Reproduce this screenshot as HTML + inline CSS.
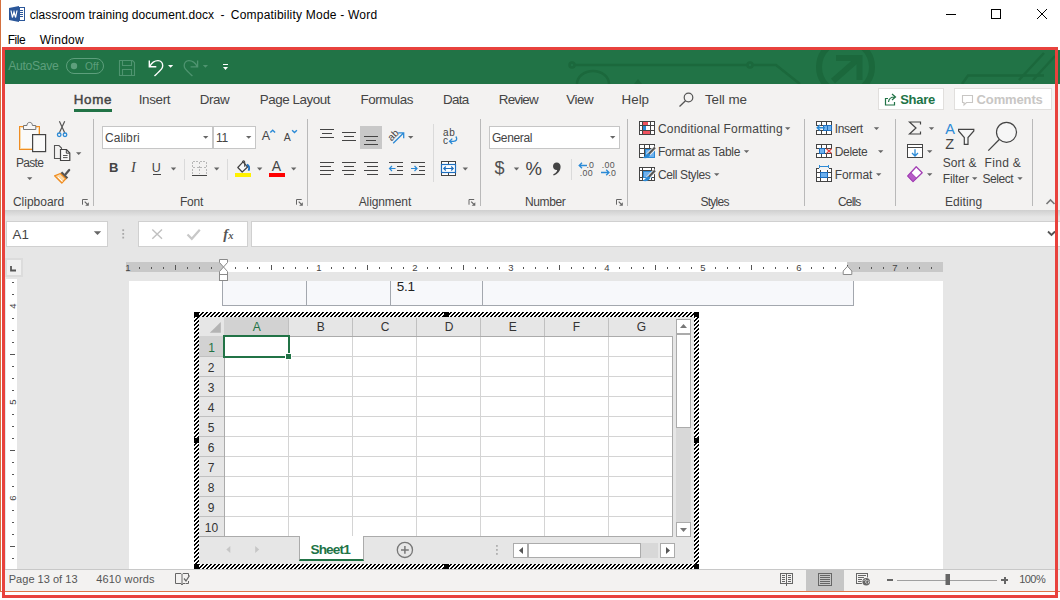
<!DOCTYPE html>
<html><head><meta charset="utf-8"><title>Word</title>
<style>
html,body{margin:0;padding:0;}
body{width:1060px;height:600px;overflow:hidden;background:#fff;position:relative;font-family:"Liberation Sans",sans-serif;}
.a{position:absolute;box-sizing:border-box;}
.t{position:absolute;white-space:nowrap;line-height:1;font-family:"Liberation Sans",sans-serif;}
svg{position:absolute;left:0;top:0;}
</style></head><body>
<!-- window accent border -->
<div class="a" style="left:0;top:0;width:1px;height:592px;background:#d4703f"></div>
<div class="a" style="left:0;top:591px;width:1060px;height:1px;background:#e0764a"></div>
<!-- green quick access bar -->
<div class="a" style="left:5px;top:50px;width:1055px;height:34px;background:#217346"></div>
<!-- tabs + ribbon -->
<div class="a" style="left:5px;top:84px;width:1055px;height:126px;background:#f3f2f1"></div>
<!-- workspace -->
<div class="a" style="left:5px;top:210px;width:1055px;height:359px;background:#e6e6e6"></div>
<div class="a" style="left:5px;top:210px;width:1055px;height:7px;background:linear-gradient(#cfcfcf,#e6e6e6)"></div>
<!-- status bar -->
<div class="a" style="left:5px;top:569px;width:1055px;height:22px;background:#f3f2f1;border-top:1px solid #c8c8c8"></div>
<div class="a" style="left:806px;top:570px;width:38px;height:21px;background:#c6c6c6"></div>
<!-- share / comments buttons -->
<div class="a" style="left:878px;top:88px;width:66px;height:22px;background:#fff;border:1px solid #e1dfdd"></div>
<div class="a" style="left:954px;top:88px;width:98px;height:22px;background:#fff;border:1px solid #e1dfdd"></div>
<!-- home underline -->
<div class="a" style="left:74px;top:109px;width:38px;height:3px;background:#217346"></div>
<!-- ribbon combo boxes -->
<div class="a" style="left:102px;top:126px;width:111px;height:23px;background:#fff;border:1px solid #c6c6c6"></div>
<div class="a" style="left:213px;top:126px;width:43px;height:23px;background:#fff;border:1px solid #c6c6c6"></div>
<div class="a" style="left:489px;top:126px;width:131px;height:23px;background:#fff;border:1px solid #c6c6c6"></div>
<!-- selected align button -->
<div class="a" style="left:360px;top:126px;width:22px;height:23px;background:#c8c8c8"></div>
<!-- formula bar -->
<div class="a" style="left:6px;top:221px;width:102px;height:26px;background:#fff;border:1px solid #d0d0d0"></div>
<div class="a" style="left:138px;top:221px;width:110px;height:26px;background:#fff;border:1px solid #d0d0d0"></div>
<div class="a" style="left:251px;top:221px;width:809px;height:26px;background:#fff;border:1px solid #d0d0d0;border-right:none"></div>
<!-- tab selector -->
<div class="a" style="left:5px;top:258px;width:18px;height:19px;background:#dcdcdc"></div>
<div class="a" style="left:7px;top:260px;width:14px;height:15px;background:#f0f0f0"></div>
<!-- rulers -->
<div class="a" style="left:126px;top:262px;width:817px;height:10px;background:#c8c8c8"></div>
<div class="a" style="left:223px;top:262px;width:624px;height:10px;background:#fff"></div>
<div class="a" style="left:6px;top:279px;width:11px;height:290px;background:#fff"></div>
<!-- page -->
<div class="a" style="left:129px;top:281px;width:814px;height:288px;background:#fff"></div>
<!-- doc table -->
<div class="a" style="left:222px;top:281px;width:632px;height:25px;background:#f7f8fb;border:1px solid #a3a7ae;border-top:none"></div>
<div class="a" style="left:306px;top:281px;width:1px;height:24px;background:#a3a7ae"></div>
<div class="a" style="left:390px;top:281px;width:1px;height:24px;background:#a3a7ae"></div>
<div class="a" style="left:482px;top:281px;width:1px;height:24px;background:#a3a7ae"></div>
<!-- EXCEL OBJECT -->
<div class="a" style="left:194px;top:312px;width:505px;height:257px;background:repeating-linear-gradient(135deg,#000 0,#000 1.42px,#fff 1.42px,#fff 2.83px)"></div>
<div class="a" style="left:199px;top:317px;width:495px;height:247px;background:#e6e6e6"></div>
<!-- grid -->
<div class="a" style="left:224px;top:336px;width:449px;height:201px;background-color:#fff;background-image:linear-gradient(90deg,#d4d4d4 1px,transparent 1px),linear-gradient(#d4d4d4 1px,transparent 1px);background-size:64px 20px;background-position:0 0;border-right:1px solid #ababab;border-bottom:1px solid #ababab"></div>
<!-- headers -->
<div class="a" style="left:224px;top:317px;width:65px;height:19px;background:#d2d2d2"></div>
<div class="a" style="left:199px;top:336px;width:25px;height:21px;background:#d2d2d2"></div>
<!-- sheet tab -->
<div class="a" style="left:299px;top:536px;width:65px;height:25px;background:#fff;border-bottom:2px solid #217346;border-left:1px solid #ababab;border-right:1px solid #ababab"></div>
<!-- scrollbars -->
<div class="a" style="left:676px;top:319px;width:15px;height:218px;background:#d8d8d8"></div>
<div class="a" style="left:676px;top:319px;width:15px;height:15px;background:#fff;border:1px solid #ababab"></div>
<div class="a" style="left:676px;top:334px;width:15px;height:94px;background:#fff;border:1px solid #ababab"></div>
<div class="a" style="left:676px;top:522px;width:15px;height:15px;background:#fff;border:1px solid #ababab"></div>
<div class="a" style="left:513px;top:543px;width:145px;height:15px;background:#d8d8d8"></div>
<div class="a" style="left:513px;top:543px;width:15px;height:15px;background:#fff;border:1px solid #ababab"></div>
<div class="a" style="left:528px;top:543px;width:113px;height:15px;background:#fff;border:1px solid #ababab"></div>
<div class="a" style="left:660px;top:543px;width:15px;height:15px;background:#fff;border:1px solid #ababab"></div>
<svg width="1060" height="600" viewBox="0 0 1060 600" fill="none">
<!-- ===== title bar ===== -->
<g id="wordicon">
<path d="M9 8 L19 6 L19 22 L9 20 Z" fill="#2b579a"/>
<rect x="19.5" y="7.5" width="5" height="13" fill="#fff" stroke="#2b579a" stroke-width="1"/>
<path d="M19 10.5h4M19 12.5h4M19 14.5h4M19 16.5h4" stroke="#2b579a" stroke-width="1"/>
<path d="M11 10.5 L12.4 17.5 L14 12 L15.6 17.5 L17 10.5" stroke="#fff" stroke-width="1.2" fill="none"/>
</g>
<g stroke="#000" stroke-width="1" shape-rendering="crispEdges">
<path d="M946 14.5h10"/>
<rect x="991.5" y="9.5" width="9" height="9"/>
</g>
<path d="M1037 9 L1047 19 M1047 9 L1037 19" stroke="#000" stroke-width="1"/>
<!-- ===== green bar decorations ===== -->
<clipPath id="gb"><rect x="5" y="50" width="1055" height="34"/></clipPath>
<g clip-path="url(#gb)">
<g stroke="#1b683c" stroke-width="2.5" fill="none">
<circle cx="572" cy="65" r="2.5"/>
<path d="M575 65 H747"/>
<circle cx="750" cy="65" r="2.5"/>
<path d="M753 65 H776 L800 84"/>
<path d="M577 84 A16 13 0 0 1 609 84"/>
<path d="M962 84 L968 75.5 H1044"/>
<path d="M1019 80 L1044 53 M1033 80 L1055 56"/>
</g>
<path d="M634 84 l4 -5 l4 5z" fill="#1b683c"/>
<g stroke="#1b683c" stroke-width="6" fill="none">
<circle cx="845.5" cy="67" r="26.5"/>
<path d="M833 81 L858 59"/>
<path d="M836 58 H859.5 V80"/>
</g>
</g>
<!-- autosave toggle -->
<rect x="66.500" y="58.500" width="37" height="15" rx="7.5" stroke="#5d9f7c" stroke-width="1"/>
<circle cx="74" cy="66" r="3.2" fill="#5d9f7c"/>
<!-- save icon -->
<g stroke="#4f9470" stroke-width="1.1">
<path d="M119.500 60.500 h13 l2 2 v13 h-15z"/>
<path d="M122.500 60.500 v5 h9 v-5"/>
<path d="M122.500 75.500 v-6 h9 v6"/>
</g>
<!-- undo -->
<path d="M149.300 60.500 v6.300 h7 M149.600 66.600 C152 62 155 60.600 158 60.600 C161 60.600 162.700 63 162.700 65.800 C162.700 68.300 161.500 69.300 154.500 76" stroke="#fff" stroke-width="1.400" fill="none"/>
<path d="M168 65 h5.200 l-2.600 2.800z" fill="#fff"/>
<!-- redo -->
<path d="M197.600 60.500 v6.300 h-7 M197.300 66.600 C194.900 62 191.900 60.600 188.900 60.600 C185.900 60.600 184.200 63 184.200 65.800 C184.200 68.300 185.400 69.300 192.400 76" stroke="#4f9470" stroke-width="1.300" fill="none"/>
<path d="M202.800 65 h5.200 l-2.600 2.800z" fill="#4f9470"/>
<!-- customize QAT -->
<path d="M223 64.500 h5" stroke="#fff" stroke-width="1"/>
<path d="M223 67 h5 l-2.500 3z" fill="#fff"/>
<!-- ===== tabs row ===== -->
<circle cx="688.500" cy="97.500" r="4.300" stroke="#555" stroke-width="1.200"/>
<path d="M685.500 100.800 L679.500 106.500" stroke="#555" stroke-width="1.300"/>
<!-- share icon -->
<g stroke="#217346" stroke-width="1.200" fill="none">
<path d="M888 98.500 h-2.500 v6.500 h9 v-3"/>
<path d="M888.500 102 c0.500 -4 3 -5 6 -5 M892 94 l3.500 3 l-3.500 3"/>
</g>
<!-- comment icon -->
<path d="M962.500 95.500 h10 v7 h-6 l-2.500 2.500 v-2.500 h-1.500z" stroke="#c8c6c4" stroke-width="1.100"/>
<!-- ===== ribbon: separators ===== -->
<g stroke="#b9b9b9" stroke-width="1" shape-rendering="crispEdges">
<path d="M93.500 119 V206 M307.500 119 V206 M480.500 119 V206 M627.500 119 V206 M804.500 119 V206 M895.500 119 V206 M1032.500 119 V206"/>
</g>
<g stroke="#dadada" stroke-width="1" shape-rendering="crispEdges">
<path d="M184.500 159 V180 M227.500 159 V180 M433.500 124 V182 M571.500 159 V180"/>
</g>
<!-- dropdown arrows (dark) -->
<g fill="#666">
<path d="M27 177.200 h5.400 l-2.700 2.800z"/>
<path d="M76 152.200 h5.400 l-2.700 2.800z"/>
<path d="M203 136 h5.400 l-2.700 2.800z"/>
<path d="M246 136 h5.400 l-2.700 2.800z"/>
<path d="M170.800 167.600 h5.400 l-2.700 2.800z"/>
<path d="M214 167.600 h5.400 l-2.700 2.800z"/>
<path d="M257 167.600 h5.400 l-2.700 2.800z"/>
<path d="M291 167.600 h5.400 l-2.700 2.800z"/>
<path d="M408 136 h5.400 l-2.700 2.800z"/>
<path d="M462.600 167.600 h5.400 l-2.700 2.800z"/>
<path d="M610 136 h5.400 l-2.700 2.800z"/>
<path d="M513.800 167.600 h5.400 l-2.700 2.800z"/>
<path d="M785 127.300 h5.400 l-2.700 2.800z"/>
<path d="M743.800 150.300 h5.400 l-2.700 2.800z"/>
<path d="M714 173.300 h5.400 l-2.700 2.800z"/>
<path d="M873.800 127.300 h5.400 l-2.700 2.800z"/>
<path d="M878 150.300 h5.400 l-2.700 2.800z"/>
<path d="M876 173.300 h5.400 l-2.700 2.800z"/>
<path d="M928.800 127.300 h5.400 l-2.700 2.800z"/>
<path d="M927 150.300 h5.400 l-2.700 2.800z"/>
<path d="M927 173.300 h5.400 l-2.700 2.800z"/>
<path d="M972 177.200 h5.400 l-2.700 2.800z"/>
<path d="M1017.300 177.200 h5.400 l-2.700 2.800z"/>
</g>
<!-- dialog launchers -->
<g stroke="#777" stroke-width="1" fill="none">
<g id="dl"><path d="M82.500 204.700 V199.500 H87.700" stroke="#666"/><path d="M88.800 202.200 V205.700 H85.200 Z" fill="#666" stroke="none"/><path d="M84.700 201.700 L87.200 204.200" stroke="#666" stroke-width="1.200"/></g>
<use href="#dl" x="214"/><use href="#dl" x="386.500"/><use href="#dl" x="534"/>
</g>
<!-- collapse chevron -->
<path d="M1046.500 204 L1050.500 200 L1054.500 204" stroke="#777" stroke-width="1.600"/>
<!-- ===== clipboard group ===== -->
<rect x="19.500" y="126.500" width="20" height="23" fill="#fafafa" stroke="#ef8d22" stroke-width="1"/>
<rect x="20.500" y="127.500" width="18" height="21" fill="none" stroke="#fbd9a8" stroke-width="1"/>
<path d="M23.500 129.500 V125.500 H27 C27 123.500 28 122.400 29.700 122.400 C31.400 122.400 32.400 123.500 32.400 125.500 H35.800 V129.500 Z" fill="#f6f6f6" stroke="#777" stroke-width="1"/>
<rect x="32.600" y="134.600" width="13" height="17" fill="#fafafa" stroke="#444" stroke-width="1.200"/>
<!-- scissors -->
<path d="M59.400 121.300 L64.700 132.800 M64.700 121.300 L59.400 132.800" stroke="#555" stroke-width="1.200"/>
<circle cx="59.200" cy="134.800" r="1.800" stroke="#2b8ad6" stroke-width="1.300"/>
<circle cx="65" cy="134.800" r="1.800" stroke="#2b8ad6" stroke-width="1.300"/>
<!-- copy -->
<path d="M60 158.500 H54.500 V145.500 H59 L61.500 148 V149" stroke="#555" stroke-width="1.100"/>
<path d="M60.500 149.500 H66.500 L69.800 153 V160.500 H60.500 Z" fill="#fafafa" stroke="#444" stroke-width="1.200"/>
<path d="M66.300 149.800 V153.200 H69.600" stroke="#444" stroke-width="1"/>
<path d="M63 155.500 H67.600 M63 157.600 H67.600" stroke="#555" stroke-width="1"/>
<!-- format painter -->
<path d="M69.200 170 L65.600 174.300" stroke="#555" stroke-width="2.200" stroke-linecap="round"/>
<path d="M61.300 172.300 L67.300 178.300" stroke="#555" stroke-width="2.600"/>
<path d="M60.300 173.500 L54.600 175.800 L61.800 183 L65.800 178.800 Z" fill="#fbd9a8" stroke="#ef8d22" stroke-width="1.300" stroke-linejoin="round"/>
<path d="M58 177 L62.500 181.500" stroke="#fff" stroke-width="1"/>
<!-- ===== font group ===== -->
<path d="M152.500 174.500 H160.500" stroke="#444" stroke-width="1" shape-rendering="crispEdges"/>
<path d="M270.300 132.600 L272.700 130.300 L275.100 132.600" stroke="#2b8ad6" stroke-width="1.400"/>
<path d="M292.100 130.300 L294.500 132.600 L296.900 130.300" stroke="#2b8ad6" stroke-width="1.400"/>
<!-- borders -->
<g stroke="#b8b8b8" stroke-width="1" stroke-dasharray="2 1.500" shape-rendering="crispEdges">
<path d="M192.500 161.500 H206.500 M192.500 161.500 V173.500 M206.500 161.500 V173.500 M199.500 162 V174 M193 167.500 H207"/>
</g>
<path d="M192 175.500 H207" stroke="#444" stroke-width="1.200" shape-rendering="crispEdges"/>
<!-- fill bucket -->
<path d="M243 161.800 L237.800 167.500 L242.200 172 L247.600 167 Z" fill="#f8f8f8" stroke="#444" stroke-width="1.200" stroke-linejoin="round"/>
<path d="M242.500 162.500 C242.300 160.500 244.600 160.300 244.700 162.200 V166.800" stroke="#444" stroke-width="1.100" fill="none"/>
<path d="M246.800 164.600 C249.200 165.300 249.700 167.600 248.600 170.800" stroke="#1e6fbf" stroke-width="1.800" fill="none"/>
<rect x="235" y="173" width="16" height="4" fill="#fff100"/>
<rect x="269" y="173" width="16" height="4" fill="#ff0000"/>
<!-- ===== alignment group ===== -->
<g stroke="#444" stroke-width="1" shape-rendering="crispEdges">
<path d="M320 129.500 H334 M322 133.500 H332 M320 137.500 H334"/>
<path d="M342 132.500 H356 M344 136.500 H354 M342 140.500 H356"/>
<path d="M364 136.500 H378 M366 140.500 H376 M364 144.500 H378"/>
<path d="M320 162.500 H334 M320 166.500 H331 M320 170.500 H334 M320 174.500 H331"/>
<path d="M342 162.500 H356 M344 166.500 H354 M342 170.500 H356 M344 174.500 H354"/>
<path d="M364 162.500 H378 M367 166.500 H378 M364 170.500 H378 M367 174.500 H378"/>
<path d="M389 162.500 H403 M397 166.500 H403 M397 170.500 H403 M389 174.500 H403"/>
<path d="M411 162.500 H425 M419 166.500 H425 M419 170.500 H425 M411 174.500 H425"/>
</g>
<g stroke="#2b8ad6" stroke-width="1.200" fill="none">
<path d="M389.500 168.500 H395.500 M392 166 L389.500 168.500 L392 171"/>
<path d="M411 168.500 H417 M414.500 166 L417 168.500 L414.500 171"/>
</g>
<!-- orientation -->
<text transform="translate(391.500 141.500) rotate(-45)" font-family="Liberation Sans" font-size="10" fill="#444">ab</text>
<path d="M393.200 143.300 L403.300 133.200 M398.300 132.800 H403.700 V138.200" stroke="#2b8ad6" stroke-width="1.300" fill="none"/>
<!-- wrap text -->
<text x="443" y="136.300" font-family="Liberation Sans" font-size="10" fill="#444" letter-spacing="0.6">ab</text>
<text x="443" y="143.600" font-family="Liberation Sans" font-size="10" fill="#444">c</text>
<path d="M455.800 136.500 C457.800 139 456.500 141.300 453.500 141.300 H449.800 M452.300 138.600 L449.500 141.300 L452.300 144" stroke="#2b8ad6" stroke-width="1.300" fill="none"/>
<!-- merge & center -->
<rect x="441.500" y="161.500" width="14" height="14" fill="#fff" stroke="#444" stroke-width="1"/>
<path d="M448.500 161.500 V164.500 M448.500 172.500 V175.500" stroke="#444" stroke-width="1"/>
<rect x="441.500" y="164.500" width="14" height="8" fill="#fff" stroke="#1e6fbf" stroke-width="1.200"/>
<path d="M444 168.500 H453 M445.800 166.500 L443.800 168.500 L445.800 170.500 M451.200 166.500 L453.200 168.500 L451.200 170.500" stroke="#1e6fbf" stroke-width="1.200" fill="none"/>
<!-- comma style -->
<path d="M556.700 162.400 C559 162.400 560.600 164 560.600 166.800 C560.600 171 557.500 174.300 553.600 175.500 L553.200 174.300 C555.500 173.300 557 171.800 557.200 170 C554.800 170.300 553 168.700 553 166.300 C553 164 554.600 162.400 556.700 162.400 Z" fill="#444"/>
<!-- inc / dec decimal -->
<g font-family="Liberation Sans" font-size="8.800" fill="#555">
<text x="586.500" y="168">.0</text>
<text x="579.800" y="175.800" letter-spacing="0.300">.00</text>
<text x="601.800" y="168" letter-spacing="0.300">.00</text>
<text x="608.500" y="175.800">.0</text>
</g>
<g stroke="#2b8ad6" stroke-width="1.300" fill="none">
<path d="M579.200 165.500 H587 M582 162.800 L579.200 165.500 L582 168.200"/>
<path d="M601 172.500 H609 M606.200 169.800 L609 172.500 L606.200 175.200"/>
</g>
<!-- ===== styles group icons ===== -->
<g shape-rendering="crispEdges">
<rect x="639.500" y="121.500" width="15" height="13" fill="#fff" stroke="#444"/>
<rect x="643" y="122" width="5" height="4" fill="#f0525f"/>
<rect x="643" y="126" width="3" height="4" fill="#2b8ad6"/>
<rect x="643" y="130" width="8" height="4" fill="#f0525f"/>
<path d="M642.500 121 V135 M650.500 121 V135 M639 125.500 H655 M639 130.500 H655" stroke="#444" fill="none"/>
<rect x="646" y="126" width="4" height="4" fill="#fff"/>
<!-- format as table -->
<rect x="639.500" y="144.500" width="15" height="13" fill="#fff" stroke="#444"/>
<path d="M644.500 144 V158 M649.500 144 V158 M639 148.500 H655 M639 153.500 H655" stroke="#444" fill="none"/>
<rect x="645.500" y="149.500" width="9" height="8" fill="#6fb1ee" stroke="#2b8ad6"/>
<!-- cell styles -->
<rect x="639.500" y="167.500" width="15" height="13" fill="#fff" stroke="#444"/>
<path d="M639 170.500 H655 M639 177.500 H655 M642.500 167 V181 M651.500 167 V181" stroke="#444" fill="none"/>
<rect x="643" y="171" width="8" height="6" fill="#6fb1ee" stroke="#2b8ad6"/>
</g>
<g id="brush">
<path d="M655.300 147.300 L647.500 155.300" stroke="#f3f2f1" stroke-width="4"/>
<path d="M655 147.600 L648 154.800" stroke="#555" stroke-width="2.200"/>
<path d="M648.800 153.200 C646 153.500 645.500 156.500 642.500 157.800 C645.500 159 649.500 158 650.300 154.800 Z" fill="#2b8ad6"/>
</g>
<use href="#brush" y="23"/>
<!-- ===== cells group icons ===== -->
<g shape-rendering="crispEdges">
<rect x="816.500" y="121.500" width="15" height="13" fill="#fff" stroke="#444"/>
<path d="M821.500 121 V135 M826.500 121 V135 M816 125.500 H832 M816 130.500 H832" stroke="#444" fill="none"/>
<rect x="816" y="126" width="6" height="4" fill="#f3f2f1"/>
<rect x="823.500" y="125.500" width="8" height="5" fill="#6fb1ee" stroke="#1e6fbf"/>
<path d="M827.500 125 V131" stroke="#1e6fbf"/>
<!-- delete -->
<rect x="816.500" y="144.500" width="15" height="13" fill="#fff" stroke="#444"/>
<path d="M821.500 144 V158 M826.500 144 V158 M816 148.500 H832 M816 153.500 H832" stroke="#444" fill="none"/>
<rect x="816" y="149" width="3" height="4" fill="#f3f2f1"/>
<rect x="825" y="149" width="8" height="4" fill="#f3f2f1"/>
<rect x="819.500" y="148.500" width="5" height="5" fill="#6fb1ee" stroke="#1e6fbf"/>
<!-- format -->
<rect x="816.500" y="168.500" width="15" height="13" fill="#fff" stroke="#444"/>
<path d="M820.500 168 V182 M827.500 168 V182 M816 172.500 H832 M816 177.500 H832" stroke="#444" fill="none"/>
<rect x="819" y="168" width="10" height="2" fill="#f3f2f1"/>
<rect x="820.500" y="172.500" width="7" height="5" fill="#6fb1ee" stroke="#1e6fbf"/>
<path d="M819 166.500 H829 M819.500 165 V168 M828.500 165 V168" stroke="#2b8ad6" fill="none"/>
</g>
<path d="M817.300 127.800 H825 M820 125 L817.200 127.800 L820 130.600" stroke="#2b8ad6" stroke-width="1.400" fill="none"/>
<path d="M826.500 148.800 L831.500 153.400 M831.500 148.800 L826.500 153.400" stroke="#e8403c" stroke-width="1.200"/>
<!-- ===== editing group icons ===== -->
<path d="M920.500 124.500 V122 H909.500 L916 128 L909.500 134 H920.500 V131.500" stroke="#444" stroke-width="1.200" fill="none"/>
<g shape-rendering="crispEdges">
<rect x="907.500" y="144.500" width="15" height="13" fill="#fff" stroke="#444"/>
<path d="M907 147.500 H923" stroke="#444"/>
</g>
<path d="M915 149.200 V156 M912 153 L915 156 L918 153" stroke="#2b8ad6" stroke-width="1.300" fill="none"/>
<path d="M907.800 176 L916.200 166.700 L922.200 172.700 L913 181.500 Z" fill="#fff" stroke="#a33fb5" stroke-width="1.300" stroke-linejoin="round"/>
<path d="M907.800 176 L910.900 172.600 L916.500 178.200 L913 181.500 Z" fill="#b65cc6" stroke="#a33fb5" stroke-width="1"/>
<path d="M958.600 129.300 H973.800 V131 L968 137.500 V144.300 H964.300 V137.500 L958.600 131 Z" stroke="#444" stroke-width="1.200" fill="#f6f6f6"/>
<circle cx="1006.500" cy="132.300" r="10" stroke="#444" stroke-width="1.200" fill="#f6f6f6"/>
<path d="M999.300 139.500 L988.300 150.600" stroke="#444" stroke-width="1.300"/>
<!-- ===== formula bar ===== -->
<path d="M93.800 231.200 h7.400 l-3.700 3.800z" fill="#666"/>
<g fill="#a8a8a8"><rect x="122.300" y="229.300" width="1.800" height="1.800"/><rect x="122.300" y="233" width="1.800" height="1.800"/><rect x="122.300" y="236.700" width="1.800" height="1.800"/></g>
<path d="M152.300 229.500 L162 238.800 M162 229.500 L152.300 238.800" stroke="#c0c0c0" stroke-width="1.400"/>
<path d="M187.500 234.500 L191.800 238.800 L199.800 229.800" stroke="#c8c8c8" stroke-width="2.200" fill="none"/>
<text x="223.200" y="238.500" font-family="Liberation Serif" font-style="italic" font-weight="700" font-size="14.500" fill="#555">f</text>
<text x="228.300" y="238.500" font-family="Liberation Serif" font-style="italic" font-weight="700" font-size="10.500" fill="#555">x</text>
<path d="M1048 231.500 L1051.500 235 L1055 231.500" stroke="#555" stroke-width="1.800" fill="none"/>
<!-- tab selector L -->
<path d="M11 266 V270.500 H16" stroke="#555" stroke-width="1.800" fill="none"/>
<!-- ===== horizontal ruler ticks ===== -->
<g fill="#555" shape-rendering="crispEdges">
<rect x="139.0" y="267" width="1" height="2"/><rect x="151.0" y="267" width="1" height="2"/><rect x="163.0" y="267" width="1" height="2"/><rect x="175.0" y="265" width="1" height="5"/><rect x="187.0" y="267" width="1" height="2"/><rect x="199.0" y="267" width="1" height="2"/><rect x="211.0" y="267" width="1" height="2"/><rect x="235.0" y="267" width="1" height="2"/><rect x="247.0" y="267" width="1" height="2"/><rect x="259.0" y="267" width="1" height="2"/><rect x="271.0" y="265" width="1" height="5"/><rect x="283.0" y="267" width="1" height="2"/><rect x="295.0" y="267" width="1" height="2"/><rect x="307.0" y="267" width="1" height="2"/><rect x="331.0" y="267" width="1" height="2"/><rect x="343.0" y="267" width="1" height="2"/><rect x="355.0" y="267" width="1" height="2"/><rect x="367.0" y="265" width="1" height="5"/><rect x="379.0" y="267" width="1" height="2"/><rect x="391.0" y="267" width="1" height="2"/><rect x="403.0" y="267" width="1" height="2"/><rect x="427.0" y="267" width="1" height="2"/><rect x="439.0" y="267" width="1" height="2"/><rect x="451.0" y="267" width="1" height="2"/><rect x="463.0" y="265" width="1" height="5"/><rect x="475.0" y="267" width="1" height="2"/><rect x="487.0" y="267" width="1" height="2"/><rect x="499.0" y="267" width="1" height="2"/><rect x="523.0" y="267" width="1" height="2"/><rect x="535.0" y="267" width="1" height="2"/><rect x="547.0" y="267" width="1" height="2"/><rect x="559.0" y="265" width="1" height="5"/><rect x="571.0" y="267" width="1" height="2"/><rect x="583.0" y="267" width="1" height="2"/><rect x="595.0" y="267" width="1" height="2"/><rect x="619.0" y="267" width="1" height="2"/><rect x="631.0" y="267" width="1" height="2"/><rect x="643.0" y="267" width="1" height="2"/><rect x="655.0" y="265" width="1" height="5"/><rect x="667.0" y="267" width="1" height="2"/><rect x="679.0" y="267" width="1" height="2"/><rect x="691.0" y="267" width="1" height="2"/><rect x="715.0" y="267" width="1" height="2"/><rect x="727.0" y="267" width="1" height="2"/><rect x="739.0" y="267" width="1" height="2"/><rect x="751.0" y="265" width="1" height="5"/><rect x="763.0" y="267" width="1" height="2"/><rect x="775.0" y="267" width="1" height="2"/><rect x="787.0" y="267" width="1" height="2"/><rect x="811.0" y="267" width="1" height="2"/><rect x="823.0" y="267" width="1" height="2"/><rect x="835.0" y="267" width="1" height="2"/><rect x="847.0" y="265" width="1" height="5"/><rect x="859.0" y="267" width="1" height="2"/><rect x="871.0" y="267" width="1" height="2"/><rect x="883.0" y="267" width="1" height="2"/><rect x="907.0" y="267" width="1" height="2"/><rect x="919.0" y="267" width="1" height="2"/><rect x="931.0" y="267" width="1" height="2"/>
</g>
<!-- indent markers -->
<g stroke="#8a8a8a" stroke-width="1" fill="#fff">
<path d="M219.500 259.500 H227.500 V262.500 L223.500 267 L219.500 262.500 Z"/>
<path d="M223.500 267 L227.500 271.500 V274.500 H219.500 V271.500 Z"/>
<rect x="219.500" y="274.500" width="8" height="6"/>
<path d="M847.500 266.300 L851.800 271 V274.500 H843.200 V271 Z"/>
</g>
<!-- vertical ruler -->
<g fill="#555" shape-rendering="crispEdges">
<rect x="12" y="281.5" width="2" height="1"/><rect x="12" y="293.5" width="2" height="1"/><rect x="12" y="317.5" width="2" height="1"/><rect x="12" y="329.5" width="2" height="1"/><rect x="12" y="341.5" width="2" height="1"/><rect x="10" y="353.5" width="5" height="1"/><rect x="12" y="365.5" width="2" height="1"/><rect x="12" y="377.5" width="2" height="1"/><rect x="12" y="389.5" width="2" height="1"/><rect x="12" y="413.5" width="2" height="1"/><rect x="12" y="425.5" width="2" height="1"/><rect x="12" y="437.5" width="2" height="1"/><rect x="10" y="449.5" width="5" height="1"/><rect x="12" y="461.5" width="2" height="1"/><rect x="12" y="473.5" width="2" height="1"/><rect x="12" y="485.5" width="2" height="1"/><rect x="12" y="509.5" width="2" height="1"/><rect x="12" y="521.5" width="2" height="1"/><rect x="12" y="533.5" width="2" height="1"/><rect x="10" y="545.5" width="5" height="1"/><rect x="12" y="557.5" width="2" height="1"/>
</g>
<g font-family="Liberation Sans" font-size="9.500" fill="#444">
<text transform="translate(16 308.800) rotate(-90)">4</text>
<text transform="translate(16 404.800) rotate(-90)">5</text>
<text transform="translate(16 500.800) rotate(-90)">6</text>
</g>
<!-- ===== excel object ===== -->
<g fill="#000" shape-rendering="crispEdges">
<rect x="194" y="312" width="5" height="5"/><rect x="444" y="312" width="5" height="5"/><rect x="694" y="312" width="5" height="5"/>
<rect x="194" y="438" width="5" height="5"/><rect x="694" y="438" width="5" height="5"/>
<rect x="194" y="564" width="5" height="5"/><rect x="444" y="564" width="5" height="5"/><rect x="694" y="564" width="5" height="5"/>
</g>
<path d="M220.800 322 V332.800 H209.800 Z" fill="#b4b4b4"/>
<g stroke="#ababab" stroke-width="1" shape-rendering="crispEdges" fill="none">
<path d="M224.500 336 V536 M224 336.500 H673 M199 536.500 H299 M364 536.500 H673"/>
<path d="M288.500 318 V336 M352.500 318 V336 M416.500 318 V336 M480.500 318 V336 M544.500 318 V336 M608.500 318 V336" stroke="#c0c0c0"/>
<path d="M199 356.500 H224 M199 376.500 H224 M199 396.500 H224 M199 416.500 H224 M199 436.500 H224 M199 456.500 H224 M199 476.500 H224 M199 496.500 H224 M199 516.500 H224" stroke="#c0c0c0"/>
</g>
<path d="M680 328 h7 l-3.500 -4z" fill="#777"/>
<path d="M680 528 h7 l-3.500 4z" fill="#777"/>
<path d="M523 547 v7 l-4 -3.500z" fill="#555"/>
<path d="M666 547 v7 l4 -3.500z" fill="#555"/>
<path d="M230.300 546 v7 l-4 -3.500z" fill="#c6c6c6"/>
<path d="M255.200 546 v7 l4 -3.500z" fill="#c6c6c6"/>
<circle cx="404.900" cy="549.900" r="7.600" stroke="#777" stroke-width="1.300"/>
<path d="M401 549.900 H408.800 M404.900 546 V553.800" stroke="#777" stroke-width="1.500"/>
<g fill="#b0b0b0"><rect x="496" y="545" width="1.800" height="1.800"/><rect x="496" y="549" width="1.800" height="1.800"/><rect x="496" y="553" width="1.800" height="1.800"/></g>
<!-- ===== status bar icons ===== -->
<g stroke="#666" stroke-width="1" fill="none">
<path d="M175.500 573.500 H181 L182 574.500 L183 573.500 H188.500 M175.500 573.500 V583.500 H181 L182 585 L183 583.500 H185"/>
<path d="M182 574.500 V584.500"/><path d="M188.500 573.500 V576 M185.500 583.500 H188.500 V581"/>
<path d="M184 578.500 L186 581 L189.500 575.500" stroke-width="1.300"/>
</g>
<g stroke="#666" stroke-width="1" fill="none" shape-rendering="crispEdges">
<path d="M780.500 573.500 H792.500 V583.500 H780.500 Z"/>
<path d="M786.500 573 V586"/>
<path d="M782 575.500 H785 M782 577.500 H785 M782 579.500 H785 M782 581.500 H785 M788 575.500 H791 M788 577.500 H791 M788 579.500 H791 M788 581.500 H791"/>
<rect x="818.500" y="573.500" width="13" height="12"/>
<path d="M820 575.500 H830 M820 577.500 H830 M820 579.500 H830 M820 581.500 H830 M820 583.500 H830"/>
<path d="M867.500 578 V573.500 H856.500 V583.500 H862"/>
<path d="M858 575.500 H866 M858 577.500 H864 M858 579.500 H862 M858 581.500 H862"/>
</g>
<circle cx="866.200" cy="581.800" r="4.600" fill="#f3f2f1"/><circle cx="866.200" cy="581.800" r="3.800" fill="#666"/>
<path d="M863.500 581 l1.500 -1.500 l1.500 1 l-1 1.500 l1 1.500 M867.500 580 l1.500 1.500 l-1 2" stroke="#d8d8d8" stroke-width="1" fill="none"/>
<g stroke="#666" shape-rendering="crispEdges">
<path d="M887 580 H893" stroke-width="2"/>
<path d="M897 580.500 H997" stroke="#a0a0a0" stroke-width="1"/>
<path d="M1001 580 H1008 M1004.500 576.500 V583.500" stroke-width="2"/>
</g>
<rect x="945.500" y="574" width="4.500" height="11" fill="#666"/>
</svg>
<!-- selection -->
<div class="a" style="left:223px;top:335px;width:67px;height:23px;border:2px solid #217346"></div>
<div class="a" style="left:285px;top:353px;width:7px;height:7px;background:#217346;border:1px solid #fff"></div>
<span class="t" style="left:29.78px;top:9.04px;font-size:12px;color:#000;letter-spacing:0.069px;">classroom training document.docx</span>
<span class="t" style="left:220.58px;top:9.04px;font-size:12px;color:#000;">-</span>
<span class="t" style="left:230.78px;top:9.04px;font-size:12px;color:#000;letter-spacing:0.214px;">Compatibility Mode - Word</span>
<span class="t" style="left:7.78px;top:33.64px;font-size:12px;color:#000;letter-spacing:-0.481px;">File</span>
<span class="t" style="left:39.78px;top:33.64px;font-size:12px;color:#000;letter-spacing:0.241px;">Window</span>
<span class="t" style="left:8.27px;top:60.47px;font-size:12.2px;color:#5d9f7c;letter-spacing:-0.334px;">AutoSave</span>
<span class="t" style="left:84.89px;top:61.57px;font-size:10.2px;color:#5d9f7c;letter-spacing:0.171px;">Off</span>
<span class="t" style="left:73.70px;top:93.06px;font-size:13.4px;color:#444;letter-spacing:0.677px;-webkit-text-stroke:0.45px #444;">Home</span>
<span class="t" style="left:138.70px;top:93.06px;font-size:13.4px;color:#444;letter-spacing:-0.333px;">Insert</span>
<span class="t" style="left:199.80px;top:93.06px;font-size:13.4px;color:#444;letter-spacing:-0.458px;">Draw</span>
<span class="t" style="left:259.70px;top:93.06px;font-size:13.4px;color:#444;letter-spacing:-0.447px;">Page Layout</span>
<span class="t" style="left:360.50px;top:93.06px;font-size:13.4px;color:#444;letter-spacing:-0.415px;">Formulas</span>
<span class="t" style="left:443.00px;top:93.06px;font-size:13.4px;color:#444;letter-spacing:-0.678px;">Data</span>
<span class="t" style="left:498.80px;top:93.06px;font-size:13.4px;color:#444;letter-spacing:-0.806px;">Review</span>
<span class="t" style="left:566.20px;top:93.06px;font-size:13.4px;color:#444;letter-spacing:-0.469px;">View</span>
<span class="t" style="left:621.60px;top:93.06px;font-size:13.4px;color:#444;letter-spacing:-0.029px;">Help</span>
<span class="t" style="left:704.90px;top:93.06px;font-size:13.4px;color:#444;letter-spacing:-0.060px;">Tell me</span>
<span class="t" style="left:900.22px;top:93.00px;font-size:13px;color:#217346;letter-spacing:-0.280px;font-weight:700;">Share</span>
<span class="t" style="left:976.62px;top:93.00px;font-size:13px;color:#c8c6c4;letter-spacing:-0.138px;font-weight:700;">Comments</span>
<span class="t" style="left:15.88px;top:156.54px;font-size:12px;color:#444;letter-spacing:-0.648px;">Paste</span>
<span class="t" style="left:12.88px;top:195.64px;font-size:12px;color:#444;letter-spacing:0.004px;">Clipboard</span>
<span class="t" style="left:104.98px;top:131.64px;font-size:12px;color:#444;letter-spacing:0.113px;">Calibri</span>
<span class="t" style="left:216.08px;top:131.64px;font-size:12px;color:#444;letter-spacing:-0.263px;">11</span>
<span class="t" style="left:109.02px;top:161.40px;font-size:13px;color:#444;font-weight:700;">B</span>
<span class="t" style="left:130.93px;top:160.26px;font-size:14.5px;color:#444;font-style:italic;font-family:'Liberation Serif',serif;">I</span>
<span class="t" style="left:151.75px;top:161.82px;font-size:12.5px;color:#444;">U</span>
<span class="t" style="left:261.75px;top:130.12px;font-size:12.5px;color:#444;">A</span>
<span class="t" style="left:283.67px;top:131.81px;font-size:10.5px;color:#444;">A</span>
<span class="t" style="left:271.76px;top:159.05px;font-size:14px;color:#444;">A</span>
<span class="t" style="left:179.88px;top:195.64px;font-size:12px;color:#444;letter-spacing:-0.186px;">Font</span>
<span class="t" style="left:358.68px;top:195.64px;font-size:12px;color:#444;letter-spacing:-0.101px;">Alignment</span>
<span class="t" style="left:491.88px;top:131.64px;font-size:12px;color:#444;letter-spacing:-0.368px;">General</span>
<span class="t" style="left:494.42px;top:158.76px;font-size:18px;color:#505050;">$</span>
<span class="t" style="left:525.49px;top:159.54px;font-size:18.5px;color:#444;">%</span>
<span class="t" style="left:524.98px;top:195.64px;font-size:12px;color:#444;letter-spacing:-0.373px;">Number</span>
<span class="t" style="left:657.98px;top:122.64px;font-size:12px;color:#444;letter-spacing:0.184px;">Conditional Formatting</span>
<span class="t" style="left:657.98px;top:145.84px;font-size:12px;color:#444;letter-spacing:-0.239px;">Format as Table</span>
<span class="t" style="left:657.98px;top:168.84px;font-size:12px;color:#444;letter-spacing:-0.386px;">Cell Styles</span>
<span class="t" style="left:700.58px;top:195.64px;font-size:12px;color:#444;letter-spacing:-0.772px;">Styles</span>
<span class="t" style="left:834.78px;top:122.64px;font-size:12px;color:#444;letter-spacing:-0.332px;">Insert</span>
<span class="t" style="left:834.78px;top:145.84px;font-size:12px;color:#444;letter-spacing:-0.359px;">Delete</span>
<span class="t" style="left:834.78px;top:168.84px;font-size:12px;color:#444;letter-spacing:-0.090px;">Format</span>
<span class="t" style="left:837.98px;top:195.64px;font-size:12px;color:#444;letter-spacing:-0.838px;">Cells</span>
<span class="t" style="left:942.68px;top:156.54px;font-size:12px;color:#444;letter-spacing:0.076px;">Sort &amp;</span>
<span class="t" style="left:942.68px;top:172.64px;font-size:12px;color:#444;letter-spacing:-0.090px;">Filter</span>
<span class="t" style="left:984.58px;top:156.54px;font-size:12px;color:#444;letter-spacing:0.308px;">Find &amp;</span>
<span class="t" style="left:982.58px;top:172.64px;font-size:12px;color:#444;letter-spacing:-0.480px;">Select</span>
<span class="t" style="left:944.98px;top:195.64px;font-size:12px;color:#444;letter-spacing:0.084px;">Editing</span>
<span class="t" style="left:945.33px;top:122.03px;font-size:14.5px;color:#2b8ad6;">A</span>
<span class="t" style="left:945.33px;top:136.53px;font-size:14.5px;color:#444;">Z</span>
<span class="t" style="left:12.40px;top:227.94px;font-size:13.3px;color:#444;letter-spacing:0.229px;">A1</span>
<span class="t" style="left:396.79px;top:279.57px;font-size:13.5px;color:#222;letter-spacing:-0.224px;">5.1</span>
<span class="t" style="left:252.68px;top:320.64px;font-size:12px;color:#217346;">A</span>
<span class="t" style="left:316.68px;top:320.64px;font-size:12px;color:#333;">B</span>
<span class="t" style="left:380.68px;top:320.64px;font-size:12px;color:#333;">C</span>
<span class="t" style="left:444.68px;top:320.64px;font-size:12px;color:#333;">D</span>
<span class="t" style="left:508.68px;top:320.64px;font-size:12px;color:#333;">E</span>
<span class="t" style="left:572.68px;top:320.64px;font-size:12px;color:#333;">F</span>
<span class="t" style="left:636.68px;top:320.64px;font-size:12px;color:#333;">G</span>
<span class="t" style="left:208.28px;top:341.84px;font-size:12px;color:#217346;">1</span>
<span class="t" style="left:207.78px;top:361.84px;font-size:12px;color:#333;">2</span>
<span class="t" style="left:207.78px;top:381.84px;font-size:12px;color:#333;">3</span>
<span class="t" style="left:207.78px;top:401.84px;font-size:12px;color:#333;">4</span>
<span class="t" style="left:207.78px;top:421.84px;font-size:12px;color:#333;">5</span>
<span class="t" style="left:207.78px;top:441.84px;font-size:12px;color:#333;">6</span>
<span class="t" style="left:207.78px;top:461.84px;font-size:12px;color:#333;">7</span>
<span class="t" style="left:207.78px;top:481.84px;font-size:12px;color:#333;">8</span>
<span class="t" style="left:207.78px;top:501.84px;font-size:12px;color:#333;">9</span>
<span class="t" style="left:204.78px;top:521.84px;font-size:12px;color:#333;letter-spacing:0.046px;">10</span>
<span class="t" style="left:310.48px;top:542.69px;font-size:13.6px;color:#217346;letter-spacing:-0.860px;font-weight:700;">Sheet1</span>
<span class="t" style="left:8.74px;top:574.29px;font-size:11px;color:#555;letter-spacing:0.023px;">Page 13 of 13</span>
<span class="t" style="left:96.24px;top:574.29px;font-size:11px;color:#555;letter-spacing:0.155px;">4610 words</span>
<span class="t" style="left:1019.14px;top:574.29px;font-size:11px;color:#555;letter-spacing:-0.531px;">100%</span>
<span class="t" style="left:125.13px;top:262.96px;font-size:9.5px;color:#444;">1</span>
<span class="t" style="left:316.33px;top:262.96px;font-size:9.5px;color:#444;">1</span>
<span class="t" style="left:412.33px;top:262.96px;font-size:9.5px;color:#444;">2</span>
<span class="t" style="left:508.33px;top:262.96px;font-size:9.5px;color:#444;">3</span>
<span class="t" style="left:604.33px;top:262.96px;font-size:9.5px;color:#444;">4</span>
<span class="t" style="left:700.33px;top:262.96px;font-size:9.5px;color:#444;">5</span>
<span class="t" style="left:796.33px;top:262.96px;font-size:9.5px;color:#444;">6</span>
<span class="t" style="left:892.33px;top:262.96px;font-size:9.5px;color:#444;">7</span>
<!-- red annotation frame -->
<div class="a" style="left:2px;top:47px;width:1056px;height:551px;border:3px solid #e8423d"></div>
</body></html>
